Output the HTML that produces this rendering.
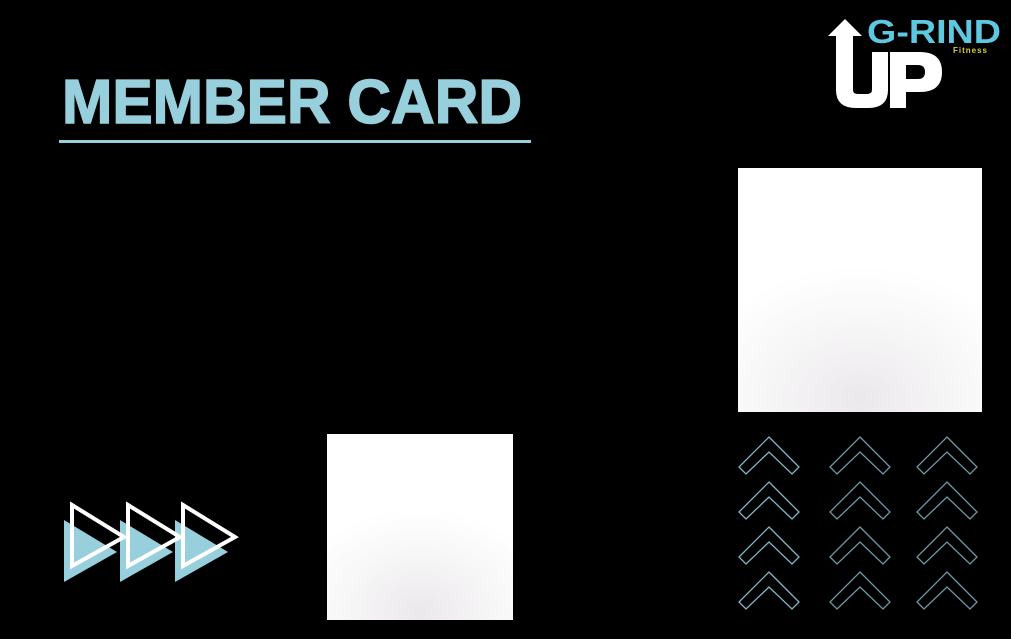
<!DOCTYPE html>
<html><head><meta charset="utf-8"><style>
html,body{margin:0;padding:0;background:#000;width:1011px;height:639px;overflow:hidden}
.box{position:absolute;background:radial-gradient(ellipse 70% 55% at 50% 95%,#ebe8eb 0%,#f7f6f7 55%,#fff 100%)}
</style></head><body>
<div class="box" style="left:738px;top:168px;width:244px;height:244px"></div>
<div class="box" style="left:327px;top:434px;width:186px;height:186px"></div>
<svg width="1011" height="639" style="position:absolute;left:0;top:0">
<text x="62" y="123" font-family="Liberation Sans, sans-serif" font-weight="bold" font-size="62" fill="#98cfdd" stroke="#98cfdd" stroke-width="1.5" textLength="460" lengthAdjust="spacingAndGlyphs">MEMBER CARD</text>
<rect x="59" y="140" width="472" height="3" fill="#98cfdd"/>
<g fill="#98cfdd">
<polygon points="64,520 117,552 64,582"/>
<polygon points="120,520 173,552 120,582"/>
<polygon points="175,520 228,552 175,582"/>
</g>
<g fill="none" stroke="#fff" stroke-width="4" stroke-linejoin="miter">
<polygon points="72,505 124,537 72,566"/>
<polygon points="128,505 180,537 128,566"/>
<polygon points="183,505 235,537 183,566"/>
</g>
<defs><path id="ch" d="M0,0 L30,30 L23,37 L0,15 L-23,37 L-30,30 Z" fill="none" stroke-width="1.3"/></defs>
<g stroke="#7fb8c6">
<use href="#ch" x="769" y="437"/><use href="#ch" x="769" y="482"/><use href="#ch" x="769" y="527"/><use href="#ch" x="769" y="572"/>
</g>
<g stroke="#6a9ba6">
<use href="#ch" x="860" y="437"/><use href="#ch" x="860" y="482"/><use href="#ch" x="860" y="527"/><use href="#ch" x="860" y="572"/>
<use href="#ch" x="947" y="437"/><use href="#ch" x="947" y="482"/><use href="#ch" x="947" y="527"/><use href="#ch" x="947" y="572"/>
</g>
<!-- logo -->
<g fill="#fff">
<path d="M845,19 L828,36 L836,36 L836,90 Q836,108 856,108 L868,108 Q888,108 888,90 L888,52 L872,52 L872,90 Q872,94 866,94 L858,94 Q853,94 853,90 L853,36 L862,36 Z"/>
<path d="M890,52 L920,52 Q942,52 942,72 Q942,92 920,92 L906,92 L906,108 L890,108 Z M906,65 L906,79 L918,79 Q925,79 925,72 Q925,65 918,65 Z" fill-rule="evenodd"/>
</g>
<text x="867" y="43" font-family="Liberation Sans, sans-serif" font-weight="bold" font-size="33" fill="#5ec8e0" textLength="134" lengthAdjust="spacingAndGlyphs">G-RIND</text>
<text x="953" y="53" font-family="Liberation Sans, sans-serif" font-weight="bold" font-size="8" fill="#d6d23a" letter-spacing="1">Fitness</text>
</svg>
</body></html>
